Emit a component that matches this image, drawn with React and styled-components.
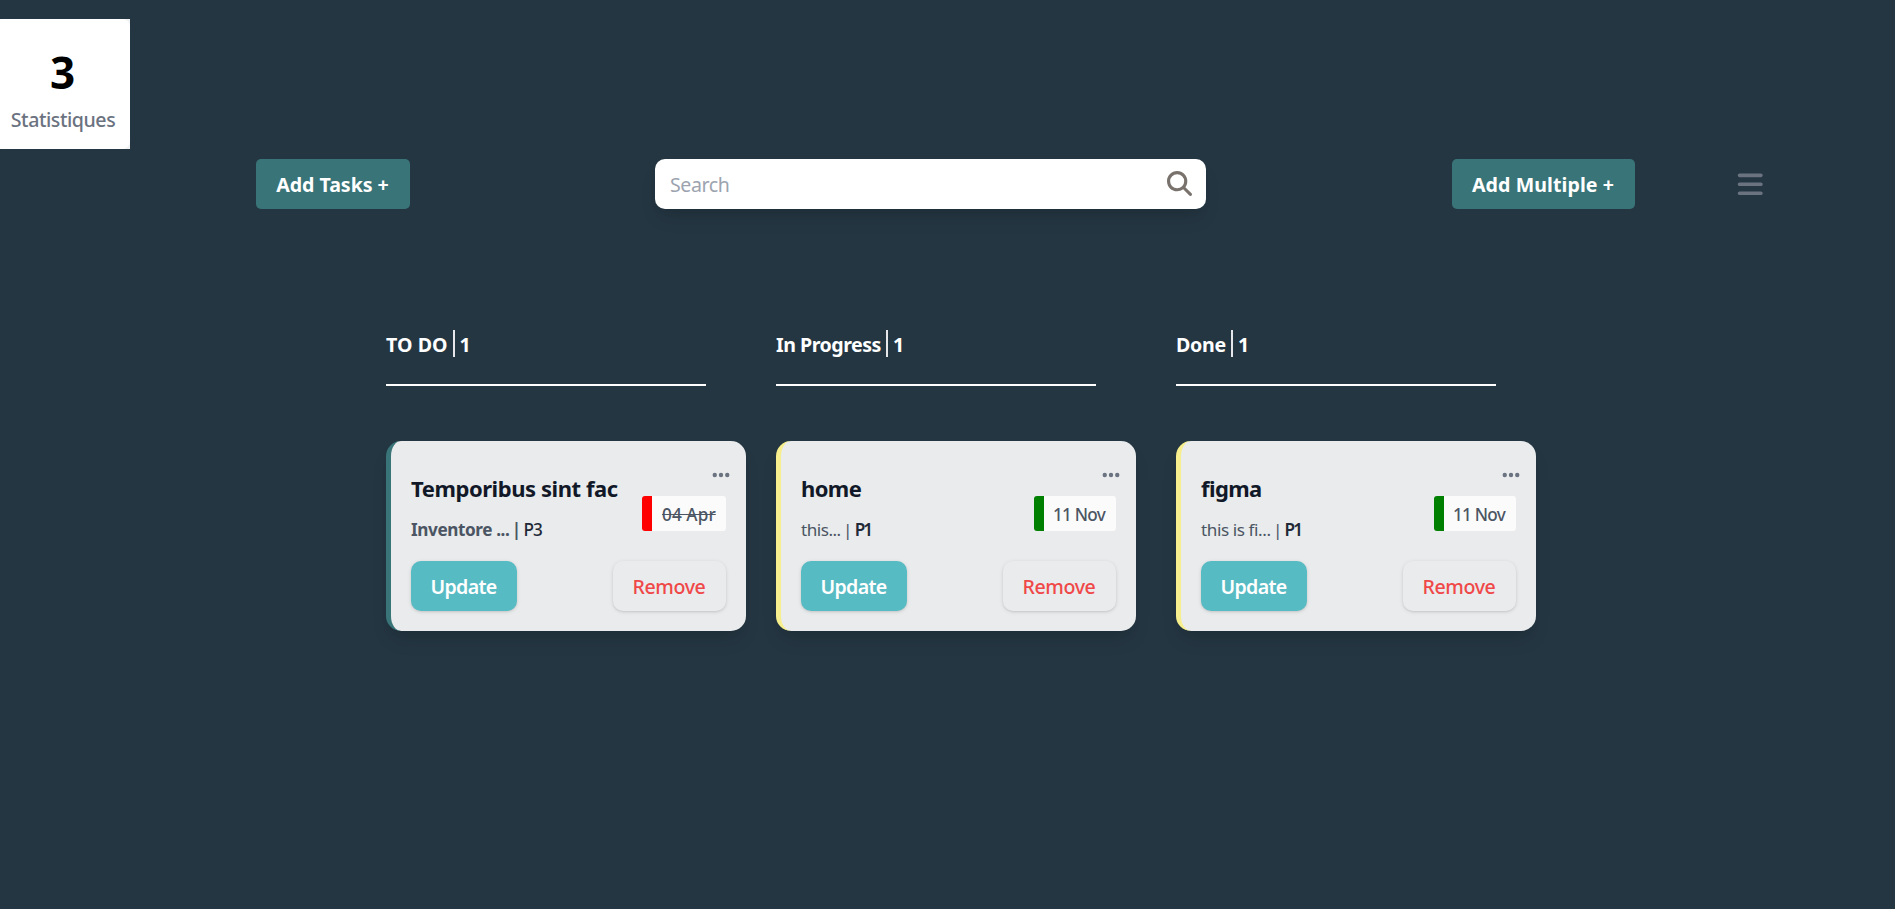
import React from 'react';
import styled, { createGlobalStyle } from 'styled-components';
import { FaBars, FaEllipsis, FaMagnifyingGlass } from 'react-icons/fa6';

const GlobalStyle = createGlobalStyle`
  *, *::before, *::after { box-sizing: border-box; }
  body {
    margin: 0;
    background: #243642;
    font-family: 'Noto Sans', 'Open Sans', sans-serif;
    font-size: 19.6px;
    line-height: 28px;
  }
  button, input { font: inherit; }
  h2, h3, p { margin: 0; }
`;

const Page = styled.div`
  min-height: 909px;
  padding-top: 19px;
  overflow: hidden;
`;

/* letter-spacing is set per label through the $track prop */
const Label = styled.span`
  letter-spacing: ${(p) => p.$track || 0}px;
  white-space: nowrap;
`;

const StatFrame = styled.div`
  width: 130px;
  height: 130px;
  background: #f0f2f4;
  overflow: hidden;
`;

const StatCard = styled.div`
  width: 135px;
  height: 130px;
  margin-left: -5px;
  padding-top: 28px;
  display: flex;
  flex-direction: column;
  align-items: center;
  background: #fff;
  border-radius: 8px;
`;

const StatValue = styled.div`
  font-size: 44px;
  font-weight: 700;
  line-height: 50px;
  color: #000;
`;

const StatLabel = styled.div`
  margin: 9px 0 0 1px;
  font-weight: 500;
  color: #6b7280;
`;

const Toolbar = styled.header`
  display: flex;
  align-items: center;
  height: 50px;
  margin: 10px 0 0 256px;
`;

const ToolbarButton = styled.button`
  flex: none;
  width: ${(p) => p.$width}px;
  height: 50px;
  padding: 2px 1px 0 0;
  border: 0;
  border-radius: 5px;
  background: #387478;
  color: #fff;
  font-weight: 700;
`;

const SearchBox = styled.label`
  display: flex;
  align-items: center;
  flex: none;
  width: 551px;
  height: 50px;
  margin: 0 246px 0 245px;
  padding: 0 14px 0 15px;
  border-radius: 10px;
  background: #fff;
  box-shadow: 0 12px 19px -4px rgba(0, 0, 0, 0.1), 0 5px 8px -5px rgba(0, 0, 0, 0.1);
  color: #78716c;
  svg { flex: none; margin-bottom: 1px; }
`;

const SearchInput = styled.input`
  flex: 1;
  min-width: 0;
  padding: 2px 0 0;
  border: 0;
  outline: 0;
  background: transparent;
  letter-spacing: -0.45px;
  &::placeholder { color: #9ca3af; opacity: 1; }
`;

const MenuButton = styled.button`
  display: flex;
  margin-left: 101px;
  padding: 0;
  border: 0;
  background: transparent;
  color: #6b7280;
`;

const Board = styled.main`
  display: grid;
  grid-template-columns: 390px 400px 360px;
  margin: 121px 0 0 386px;
`;

const Column = styled.section`
  width: 360px;
`;

const ColumnTitle = styled.h2`
  display: flex;
  align-items: flex-start;
  width: 320px;
  height: 56px;
  border-bottom: 2px solid #fff;
  font-size: 19.6px;
  font-weight: 700;
  line-height: 30px;
  color: #fff;
`;

const Count = styled.span`
  height: 27px;
  margin-left: 5px;
  padding-left: 5px;
  border-left: 2px solid #e5e7eb;
`;

const Card = styled.article`
  display: flex;
  flex-direction: column;
  justify-content: space-between;
  height: 190px;
  margin-top: 55px;
  padding: 0 0 20px 20px;
  border-left: 5px solid ${(p) => p.$accent};
  border-radius: 15px;
  background: #e9ebec;
  box-shadow: 0 12px 19px -4px rgba(0, 0, 0, 0.1), 0 5px 8px -5px rgba(0, 0, 0, 0.1);
`;

const CardTop = styled.div`
  display: flex;
  justify-content: space-between;
`;

const CardText = styled.div`
  padding-top: 33px;
`;

const CardTitle = styled.h3`
  font-size: 22px;
  font-weight: 700;
  color: #111827;
`;

const Description = styled.p`
  display: flex;
  margin-top: 16px;
  font-size: 17.15px;
  font-weight: ${(p) => (p.$strong ? 700 : 400)};
  line-height: 24px;
  color: #4b5563;
`;

const Divider = styled.span`
  width: 14px;
  text-align: center;
`;

const Priority = styled.span`
  font-weight: ${(p) => p.$weight};
  letter-spacing: ${(p) => p.$track}px;
  color: #1f2937;
`;

const CardAside = styled.div`
  display: flex;
  flex-direction: column;
  align-items: flex-end;
`;

const Dots = styled.span`
  display: flex;
  margin: 24px 15px 0 0;
  height: 20px;
  color: #6b7280;
`;

const DateChip = styled.time`
  width: ${(p) => p.$width}px;
  height: 35px;
  margin: 11px 20px 0 0;
  padding-left: ${(p) => (p.$struck ? 10 : 9)}px;
  border-left: 10px solid ${(p) => p.$color};
  border-radius: 3px;
  background: #fbfbfb;
  font-size: 17.15px;
  font-weight: 500;
  line-height: 37px;
  color: #4b5563;
  text-decoration: ${(p) => (p.$struck ? 'line-through' : 'none')};
`;

const Actions = styled.div`
  display: flex;
  justify-content: space-between;
  margin-right: 20px;
`;

const ActionButton = styled.button`
  width: ${(p) => (p.$primary ? 106 : 113)}px;
  height: 50px;
  padding: 2px 1px 0 0;
  border: 0;
  border-radius: 10px;
  background: ${(p) => (p.$primary ? '#57bbc4' : 'transparent')};
  color: ${(p) => (p.$primary ? '#fff' : '#f04848')};
  font-weight: ${(p) => (p.$primary ? 650 : 500)};
  box-shadow: 0 1px 4px rgba(0, 0, 0, 0.1), 0 1px 2px rgba(0, 0, 0, 0.08);
`;

const columns = [
  {
    name: 'TO DO', track: 0.05, accent: '#387478',
    title: 'Temporibus sint fac', titleTrack: -0.44, text: 'Inventore ...', textTrack: -0.4, strong: true,
    priority: 'P3', priorityTrack: -0.9, date: '04 Apr', dateTrack: 0.1, dateWidth: 84, dateColor: '#ff0000', struck: true,
  },
  {
    name: 'In Progress', track: -0.49, accent: '#f7ef8e',
    title: 'home', titleTrack: -0.6, text: 'this...', textTrack: -0.5,
    priority: 'P1', priorityTrack: -2, date: '11 Nov', dateTrack: -0.75, dateWidth: 82, dateColor: '#008000',
  },
  {
    name: 'Done', track: -0.27, accent: '#f7ef8e',
    title: 'figma', titleTrack: -0.6, text: 'this is fi...', textTrack: -0.42,
    priority: 'P1', priorityTrack: -2, date: '11 Nov', dateTrack: -0.75, dateWidth: 82, dateColor: '#008000',
  },
];

function TaskCard({ task }) {
  return (
    <Card $accent={task.accent}>
      <CardTop>
        <CardText>
          <CardTitle><Label $track={task.titleTrack}>{task.title}</Label></CardTitle>
          <Description $strong={task.strong}>
            <Label $track={task.textTrack}>{task.text}</Label>
            <Divider>|</Divider>
            <Priority $weight={task.strong ? 500 : 600} $track={task.priorityTrack}>{task.priority}</Priority>
          </Description>
        </CardText>
        <CardAside>
          <Dots><FaEllipsis size={20} /></Dots>
          <DateChip $width={task.dateWidth} $color={task.dateColor} $struck={task.struck}>
            <Label $track={task.dateTrack}>{task.date}</Label>
          </DateChip>
        </CardAside>
      </CardTop>
      <Actions>
        <ActionButton $primary><Label $track={-0.7}>Update</Label></ActionButton>
        <ActionButton><Label $track={-0.4}>Remove</Label></ActionButton>
      </Actions>
    </Card>
  );
}

export default function App() {
  return (
    <>
      <GlobalStyle />
      <Page>
        <StatFrame>
          <StatCard>
            <StatValue>3</StatValue>
            <StatLabel><Label $track={-0.45}>Statistiques</Label></StatLabel>
          </StatCard>
        </StatFrame>
        <Toolbar>
          <ToolbarButton $width={154}><Label $track={-0.05}>Add Tasks +</Label></ToolbarButton>
          <SearchBox>
            <SearchInput placeholder="Search" />
            <FaMagnifyingGlass size={25} />
          </SearchBox>
          <ToolbarButton $width={183}><Label $track={0.08}>Add Multiple +</Label></ToolbarButton>
          <MenuButton aria-label="Menu"><FaBars size={28.5} /></MenuButton>
        </Toolbar>
        <Board>
          {columns.map((c) => (
            <Column key={c.name}>
              <ColumnTitle>
                <Label $track={c.track}>{c.name}</Label>
                <Count>1</Count>
              </ColumnTitle>
              <TaskCard task={c} />
            </Column>
          ))}
        </Board>
      </Page>
    </>
  );
}
